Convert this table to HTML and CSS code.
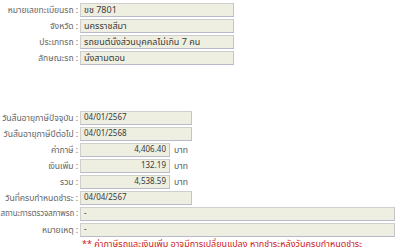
FILE: index.html
```html
<!DOCTYPE html>
<html lang="th">
<head>
<meta charset="utf-8">
<title>ข้อมูลภาษีรถ</title>
<link rel="stylesheet" href="styles.css">
</head>
<body>
<div class="form">
  <div class="group">
    <div class="row"><span class="label">หมายเลขทะเบียนรถ :</span><span class="field w-info thai">ขช 7801</span></div>
    <div class="row"><span class="label">จังหวัด :</span><span class="field w-info thai">นครราชสีมา</span></div>
    <div class="row"><span class="label">ประเภทรถ :</span><span class="field w-info thai">รถยนต์นั่งส่วนบุคคลไม่เกิน 7 คน</span></div>
    <div class="row"><span class="label">ลักษณะรถ :</span><span class="field w-info thai">นั่งสามตอน</span></div>
  </div>

  <div class="group second">
    <div class="row"><span class="label">วันสิ้นอายุภาษีปัจจุบัน :</span><span class="field w-date">04/01/2567</span></div>
    <div class="row"><span class="label">วันสิ้นอายุภาษีปีต่อไป :</span><span class="field w-date">04/01/2568</span></div>
    <div class="row"><span class="label">ค่าภาษี :</span><span class="field w-money">4,406.40</span><span class="unit">บาท</span></div>
    <div class="row"><span class="label">เงินเพิ่ม :</span><span class="field w-money">132.19</span><span class="unit">บาท</span></div>
    <div class="row"><span class="label">รวม :</span><span class="field w-money">4,538.59</span><span class="unit">บาท</span></div>
    <div class="row"><span class="label">วันที่ครบกำหนดชำระ :</span><span class="field w-date">04/04/2567</span></div>
    <div class="row"><span class="label tight">สถานะการตรวจสภาพรถ :</span><span class="field w-long">-</span></div>
    <div class="row"><span class="label">หมายเหตุ :</span><span class="field w-long">-</span></div>
    <div class="row note-row"><span class="label"></span><span class="note">** ค่าภาษีรถและเงินเพิ่ม อาจมีการเปลี่ยนแปลง หากชำระหลังวันครบกำหนดชำระ</span></div>
  </div>
</div>
</body>
</html>
```

FILE: styles.css
```css
html, body {
  margin: 0;
  padding: 0;
  background: #ffffff;
}

body {
  font-family: Tahoma, "Noto Sans Thai", "Noto Sans", "DejaVu Sans", sans-serif;
  font-size: 8px;
  color: #333333;
}

.form {
  padding-top: 3px;
}

.group {
  display: flex;
  flex-direction: column;
  gap: 2px;
}

.group.second {
  margin-top: 46px;
}

.row {
  display: flex;
  align-items: center;
  height: 14px;
}

.note-row {
  height: 10px;
}

.label {
  box-sizing: border-box;
  width: 80px;
  flex: none;
  text-align: right;
  color: #666666;
  white-space: nowrap;
  padding-right: 2px;
  font-size: 8.6px;
  letter-spacing: -0.05px;
}

/* the longest caption needs a slightly smaller size to fit its column */
.label.tight {
  font-size: 8px;
  letter-spacing: -0.15px;
}

.field {
  box-sizing: border-box;
  height: 14px;
  line-height: 12px;
  padding: 0 3px;
  background: #efefe1;
  border: 1px solid #cfcfcf;
  border-bottom-color: #b9b9cc;
  border-right-color: #c4c4c4;
  color: #3a3a3a;
  white-space: nowrap;
  overflow: hidden;
}

.field.thai {
  font-size: 9px;
}

.w-info { width: 154px; }
.w-date { width: 112px; }
.w-money { width: 90px; text-align: right; }
.w-long { width: 315px; }

.unit {
  margin-left: 4px;
  color: #555555;
  font-size: 8.6px;
}

.note {
  color: #cc2222;
  padding-left: 2px;
  white-space: nowrap;
  font-size: 9px;
}
```
